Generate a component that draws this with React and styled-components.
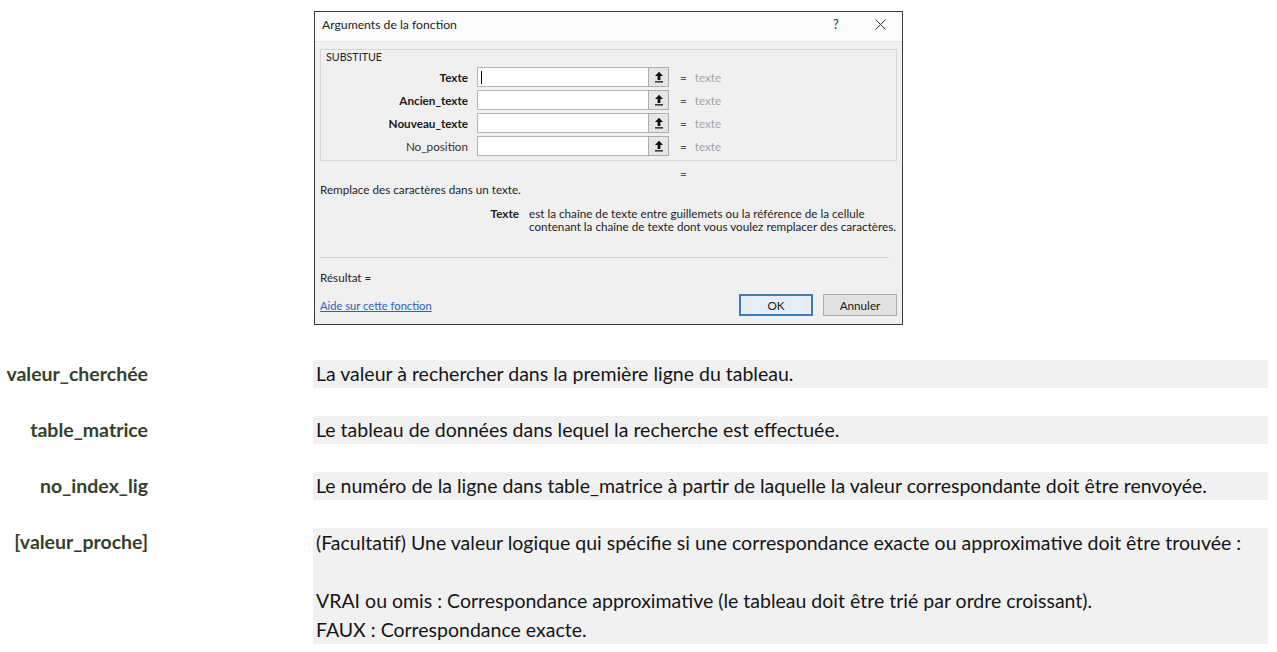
import React from "react";
import styled, { createGlobalStyle } from "styled-components";

const Global = createGlobalStyle`
  html, body { margin: 0; padding: 0; background: #ffffff; }
  body { font-family: Lato, "Noto Sans", sans-serif; }
`;

const Page = styled.div`
  width: 1277px;
  height: 652px;
  display: flex;
  flex-direction: column;
  padding-top: 11px;
  box-sizing: border-box;
  overflow: hidden;
`;

const Dialog = styled.div`
  margin-left: 314px;
  width: 589px;
  height: 314px;
  box-sizing: border-box;
  border: 1px solid #3a3a3a;
  background: #f0f0f0;
  display: flex;
  flex-direction: column;
  font-family: Lato, "Noto Sans", sans-serif;
  font-size: 11.7px;
  line-height: 13px;
  color: #1e1e1e;
`;

const TitleBar = styled.div`
  height: 30px;
  flex: none;
  background: #fbfbfb;
  border-bottom: 1px solid #e6e6e6;
  box-sizing: border-box;
  display: flex;
  align-items: center;
  padding: 0 0 4px 7px;
  font-size: 12.2px;
`;

const Title = styled.span`
  flex: 1;
  color: #222;
`;

const TitleButton = styled.span`
  width: 44px;
  display: flex;
  justify-content: center;
  align-items: center;
  color: #333;
  font-size: 13px;
`;

const Body = styled.div`
  flex: 1;
  display: flex;
  flex-direction: column;
  padding: 7px 5px 6px 5px;
`;

const Group = styled.div`
  border: 1px solid #d7d7d7;
  padding: 0 0 4px 0;
  display: flex;
  flex-direction: column;
`;

const Legend = styled.div`
  height: 13px;
  padding-left: 5px;
  margin-bottom: 4px;
  font-size: 10.7px;
  line-height: 13px;
  color: #222;
`;

const ArgRows = styled.div`
  display: flex;
  flex-direction: column;
  gap: 3px;
`;

const ArgRow = styled.div`
  display: flex;
  align-items: center;
  height: 20px;
`;

const ArgLabel = styled.div`
  width: 147px;
  text-align: right;
  font-weight: ${(p) => (p.$required ? 700 : 400)};
  color: ${(p) => (p.$required ? "#1a1a1a" : "#333")};
  margin-right: 9px;
`;

const Input = styled.div`
  width: 171px;
  height: 20px;
  box-sizing: border-box;
  background: #fff;
  border: 1px solid #b4b4b4;
  border-right: none;
  display: flex;
  align-items: center;
  padding-left: 3px;
`;

const Caret = styled.span`
  width: 1px;
  height: 13px;
  background: #000;
`;

const RefButton = styled.div`
  width: 21px;
  height: 20px;
  box-sizing: border-box;
  border: 1px solid #adadad;
  background: #e6e6e6;
  display: flex;
  align-items: center;
  justify-content: center;
`;

const Eq = styled.span`
  margin-left: 11px;
  color: #555;
`;

const Placeholder = styled.span`
  margin-left: 8px;
  color: #a6a6a6;
`;

const EqLine = styled.div`
  margin-top: 6px;
  padding-left: 360px;
  color: #555;
`;

const Summary = styled.div`
  margin-top: 3px;
`;

const ArgHelp = styled.div`
  margin-top: 11px;
  display: flex;
`;

const ArgHelpName = styled.div`
  width: 199px;
  text-align: right;
  font-weight: 700;
  flex: none;
`;

const ArgHelpText = styled.div`
  margin-left: 10px;
`;

const Separator = styled.div`
  margin-top: 24px;
  margin-right: 8px;
  height: 1px;
  background: #d4d4d4;
`;

const Result = styled.div`
  margin-top: 13px;
`;

const Footer = styled.div`
  margin-top: 10px;
  height: 22px;
  display: flex;
  align-items: center;
  gap: 10px;
`;

const HelpLink = styled.a`
  flex: 1;
  color: #2a66ad;
  text-decoration: underline;
  font-size: 11.2px;
`;

const Button = styled.div`
  width: 74px;
  height: 22px;
  box-sizing: border-box;
  display: flex;
  align-items: center;
  justify-content: center;
  border: ${(p) => (p.$default ? "2px solid #3a7dbd" : "1px solid #adadad")};
  background: ${(p) => (p.$default ? "#e5eef6" : "#e1e1e1")};
  color: #1a1a1a;
`;

const Table = styled.div`
  margin-top: 35px;
  display: grid;
  grid-template-columns: 148px 955px;
  column-gap: 165px;
  row-gap: 28px;
  font-family: Lato, "Noto Sans", sans-serif;
  font-size: 19.5px;
`;

const Name = styled.div`
  text-align: right;
  font-weight: 700;
  color: #36412c;
  line-height: 28px;
  white-space: nowrap;
`;

const Desc = styled.div`
  background: #f1f1f2;
  color: #151515;
  line-height: ${(p) => (p.$tall ? "29px" : "28px")};
  padding-left: 3px;
  white-space: nowrap;
`;

const UploadIcon = () => (
  <svg width="10" height="12" viewBox="0 0 10 12">
    <path d="M5 0.8 L9 5 H6.4 V9 H3.6 V5 H1 Z" fill="#111" />
    <rect x="1" y="10.2" width="8" height="1.3" fill="#111" />
  </svg>
);

const CloseIcon = () => (
  <svg width="11" height="11" viewBox="0 0 11 11">
    <path d="M0.5 0.5 L10.5 10.5 M10.5 0.5 L0.5 10.5" stroke="#333" strokeWidth="1" />
  </svg>
);

const args = [
  { name: "Texte", required: true, caret: true },
  { name: "Ancien_texte", required: true },
  { name: "Nouveau_texte", required: true },
  { name: "No_position", required: false },
];

const rows = [
  { name: "valeur_cherchée", desc: ["La valeur à rechercher dans la première ligne du tableau."] },
  { name: "table_matrice", desc: ["Le tableau de données dans lequel la recherche est effectuée."] },
  {
    name: "no_index_lig",
    desc: ["Le numéro de la ligne dans table_matrice à partir de laquelle la valeur correspondante doit être renvoyée."],
  },
  {
    name: "[valeur_proche]",
    tall: true,
    desc: [
      "(Facultatif) Une valeur logique qui spécifie si une correspondance exacte ou approximative doit être trouvée :",
      "\u00a0",
      "VRAI ou omis : Correspondance approximative (le tableau doit être trié par ordre croissant).",
      "FAUX : Correspondance exacte.",
    ],
  },
];

export default function App() {
  return (
    <>
      <Global />
      <Page>
        <Dialog>
          <TitleBar>
            <Title>Arguments de la fonction</Title>
            <TitleButton>?</TitleButton>
            <TitleButton>
              <CloseIcon />
            </TitleButton>
          </TitleBar>
          <Body>
            <Group>
              <Legend>SUBSTITUE</Legend>
              <ArgRows>
                {args.map((a) => (
                  <ArgRow key={a.name}>
                    <ArgLabel $required={a.required}>{a.name}</ArgLabel>
                    <Input>{a.caret && <Caret />}</Input>
                    <RefButton>
                      <UploadIcon />
                    </RefButton>
                    <Eq>=</Eq>
                    <Placeholder>texte</Placeholder>
                  </ArgRow>
                ))}
              </ArgRows>
            </Group>
            <EqLine>=</EqLine>
            <Summary>Remplace des caractères dans un texte.</Summary>
            <ArgHelp>
              <ArgHelpName>Texte</ArgHelpName>
              <ArgHelpText>
                est la chaîne de texte entre guillemets ou la référence de la cellule
                <br />
                contenant la chaîne de texte dont vous voulez remplacer des caractères.
              </ArgHelpText>
            </ArgHelp>
            <Separator />
            <Result>Résultat =</Result>
            <Footer>
              <HelpLink href="#">Aide sur cette fonction</HelpLink>
              <Button $default>OK</Button>
              <Button>Annuler</Button>
            </Footer>
          </Body>
        </Dialog>
        <Table>
          {rows.map((r) => (
            <React.Fragment key={r.name}>
              <Name>{r.name}</Name>
              <Desc $tall={r.tall}>
                {r.desc.map((line, i) => (
                  <div key={i}>{line}</div>
                ))}
              </Desc>
            </React.Fragment>
          ))}
        </Table>
      </Page>
    </>
  );
}
